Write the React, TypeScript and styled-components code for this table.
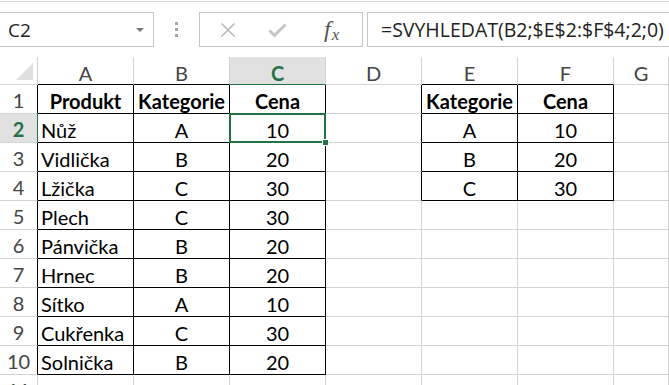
import React from 'react';
import styled, { createGlobalStyle } from 'styled-components';

const GREEN = '#217346';
const GRID = '#d4d4d4';
const BLACK = '#000';

const GlobalStyle = createGlobalStyle`
  html, body {
    margin: 0;
    padding: 0;
    background: #fff;
  }
  body {
    font-family: Lato, "Noto Sans", sans-serif;
    overflow: hidden;
  }
`;

const products: [string, string, number][] = [
  ['Nůž', 'A', 10],
  ['Vidlička', 'B', 20],
  ['Lžička', 'C', 30],
  ['Plech', 'C', 30],
  ['Pánvička', 'B', 20],
  ['Hrnec', 'B', 20],
  ['Sítko', 'A', 10],
  ['Cukřenka', 'C', 30],
  ['Solnička', 'B', 20],
];

const lookup: [string, number][] = [
  ['A', 10],
  ['B', 20],
  ['C', 30],
];

const columns = ['A', 'B', 'C', 'D', 'E', 'F', 'G'];
const ROWS = 11;

// cell content: row 1..11, col 0..6
const cellValue = (row: number, col: number): { text: string; bold?: boolean; align?: 'left' | 'center' } | null => {
  if (row === 1) {
    const heads: Record<number, string> = { 0: 'Produkt', 1: 'Kategorie', 2: 'Cena', 4: 'Kategorie', 5: 'Cena' };
    return heads[col] ? { text: heads[col], bold: true } : null;
  }
  const p = products[row - 2];
  if (p && col <= 2) {
    if (col === 0) return { text: p[0], align: 'left' };
    return { text: String(p[col]) };
  }
  const l = lookup[row - 2];
  if (l && (col === 4 || col === 5)) return { text: String(l[col - 4]) };
  return null;
};

const inTable = (row: number, col: number) =>
  (row >= 1 && row <= 10 && col >= 0 && col <= 2) || (row >= 1 && row <= 4 && col >= 4 && col <= 5);

const Page = () => (
  <>
    <GlobalStyle />
    <Wrap>
      <FormulaBar>
        <NameBox>
          <span>C2</span>
          <DropArrow />
        </NameBox>
        <Grip>
          <i />
          <i />
          <i />
        </Grip>
        <ActionBox>
          <CancelIcon width="16" height="16" viewBox="0 0 16 16">
            <path d="M1.5 1.5 L14.5 14.5 M14.5 1.5 L1.5 14.5" stroke="#b9b9b9" strokeWidth="1.6" fill="none" />
          </CancelIcon>
          <EnterIcon width="19" height="15" viewBox="0 0 19 15">
            <path d="M1.5 7.5 L6.5 12.5 L17.5 1.5" stroke="#c4c4c4" strokeWidth="3" fill="none" />
          </EnterIcon>
          <Fx>
            f<span>x</span>
          </Fx>
        </ActionBox>
        <FormulaInput>=SVYHLEDAT(B2;$E$2:$F$4;2;0)</FormulaInput>
      </FormulaBar>

      <Sheet>
        <Corner />
        {columns.map((c, i) => (
          <ColHead
            key={c}
            $selected={c === 'C'}
            $bottom={c === 'C' ? GREEN : inTable(1, i) ? BLACK : GRID}
          >
            {c}
          </ColHead>
        ))}

        {Array.from({ length: ROWS }, (_, r) => {
          const row = r + 1;
          return (
            <React.Fragment key={row}>
              <RowHead $selected={row === 2} $right={row === 2 ? GREEN : inTable(row, 0) ? BLACK : GRID}>
                {row}
              </RowHead>
              {columns.map((c, col) => {
                const v = cellValue(row, col);
                const right = inTable(row, col) || inTable(row, col + 1) ? BLACK : GRID;
                const bottom = inTable(row, col) || inTable(row + 1, col) ? BLACK : GRID;
                return (
                  <Cell
                    key={c}
                    $right={right}
                    $bottom={bottom}
                    $bold={v?.bold}
                    $align={v?.align ?? 'center'}
                    $active={row === 2 && c === 'C'}
                  >
                    {v?.text}
                  </Cell>
                );
              })}
            </React.Fragment>
          );
        })}
      </Sheet>
    </Wrap>
  </>
);

const Wrap = styled.div`
  width: 669px;
  height: 385px;
  overflow: hidden;
`;

const FormulaBar = styled.div`
  display: flex;
  align-items: flex-start;
  height: 45px;
  margin-top: 1px;
  padding-top: 10px;
  border-top: 1px solid #d6d6d6;
  font-family: "Open Sans", "Noto Sans", sans-serif;
`;

const NameBox = styled.div`
  box-sizing: border-box;
  width: 154px;
  height: 35px;
  border: 1px solid #c6c6c6;
  border-left: none;
  display: flex;
  align-items: center;
  justify-content: space-between;
  padding: 0 9px 0 8px;
  font-size: 19px;
  color: #222;
`;

const DropArrow = styled.span`
  width: 0;
  height: 0;
  border-left: 4px solid transparent;
  border-right: 4px solid transparent;
  border-top: 4px solid #777;
  margin-top: 1px;
`;

const Grip = styled.div`
  width: 45px;
  height: 35px;
  display: flex;
  flex-direction: column;
  align-items: center;
  justify-content: center;
  gap: 3px;
  & > i {
    display: block;
    width: 3px;
    height: 3px;
    background: #a6a6a6;
  }
`;

const ActionBox = styled.div`
  box-sizing: border-box;
  width: 164px;
  height: 35px;
  border: 1px solid #c6c6c6;
  display: flex;
  align-items: center;
  padding-left: 20px;
`;

const CancelIcon = styled.svg`
  margin-right: 32px;
`;

const EnterIcon = styled.svg`
  margin-right: 37px;
  margin-top: 2px;
`;

const Fx = styled.div`
  font-family: "Liberation Serif", "DejaVu Serif", serif;
  font-style: italic;
  font-size: 24px;
  color: #555;
  line-height: 1;
  margin-top: -2px;
  & > span {
    font-size: 17px;
    position: relative;
    top: 3px;
    margin-left: 1px;
  }
`;

const FormulaInput = styled.div`
  box-sizing: border-box;
  flex: 1;
  height: 35px;
  margin-left: 4px;
  border: 1px solid #c6c6c6;
  border-right: none;
  display: flex;
  align-items: center;
  padding-left: 13px;
  font-size: 19.5px;
  color: #222;
  white-space: nowrap;
  overflow: hidden;
`;

const Sheet = styled.div`
  display: grid;
  grid-template-columns: 38px repeat(6, 96px) 1fr;
  grid-template-rows: 28px;
  grid-auto-rows: 29px;
  font-size: 20px;
`;

const Corner = styled.div`
  position: relative;
  box-sizing: border-box;
  border-right: 1px solid ${GRID};
  border-bottom: 1px solid ${GRID};
  &::after {
    content: '';
    position: absolute;
    right: 4px;
    bottom: 4px;
    width: 0;
    height: 0;
    border-left: 17px solid transparent;
    border-bottom: 17px solid #dfdfdf;
  }
`;

const ColHead = styled.div<{ $selected?: boolean; $bottom: string }>`
  box-sizing: border-box;
  display: flex;
  align-items: center;
  justify-content: center;
  padding-top: 4px;
  background: ${(p) => (p.$selected ? '#e1e1e1' : '#fff')};
  color: ${(p) => (p.$selected ? GREEN : '#444')};
  font-weight: ${(p) => (p.$selected ? 700 : 400)};
  border-right: 1px solid ${GRID};
  border-bottom: 1px solid ${(p) => p.$bottom};
`;

const RowHead = styled.div<{ $selected?: boolean; $right: string }>`
  box-sizing: border-box;
  display: flex;
  align-items: center;
  justify-content: center;
  padding-top: 2px;
  background: ${(p) => (p.$selected ? '#e1e1e1' : '#fff')};
  color: ${(p) => (p.$selected ? GREEN : '#444')};
  font-weight: ${(p) => (p.$selected ? 700 : 400)};
  border-right: 1px solid ${(p) => p.$right};
  border-bottom: 1px solid ${GRID};
`;

const Cell = styled.div<{ $right: string; $bottom: string; $bold?: boolean; $align: 'left' | 'center'; $active?: boolean }>`
  position: relative;
  box-sizing: border-box;
  display: flex;
  align-items: center;
  justify-content: ${(p) => (p.$align === 'left' ? 'flex-start' : 'center')};
  padding: 3px 0 0 ${(p) => (p.$align === 'left' ? '3px' : '0')};
  color: #000;
  font-weight: ${(p) => (p.$bold ? 700 : 400)};
  white-space: nowrap;
  border-right: 1px solid ${(p) => p.$right};
  border-bottom: 1px solid ${(p) => p.$bottom};
  ${(p) =>
    p.$active &&
    `
    &::before {
      content: '';
      position: absolute;
      top: -1px;
      left: -1px;
      right: -1px;
      bottom: -1px;
      border: 2px solid ${GREEN};
      pointer-events: none;
    }
    &::after {
      content: '';
      position: absolute;
      right: -4px;
      bottom: -4px;
      width: 5px;
      height: 5px;
      background: ${GREEN};
      border: 1px solid #fff;
      z-index: 2;
    }
  `}
`;

export default Page;
